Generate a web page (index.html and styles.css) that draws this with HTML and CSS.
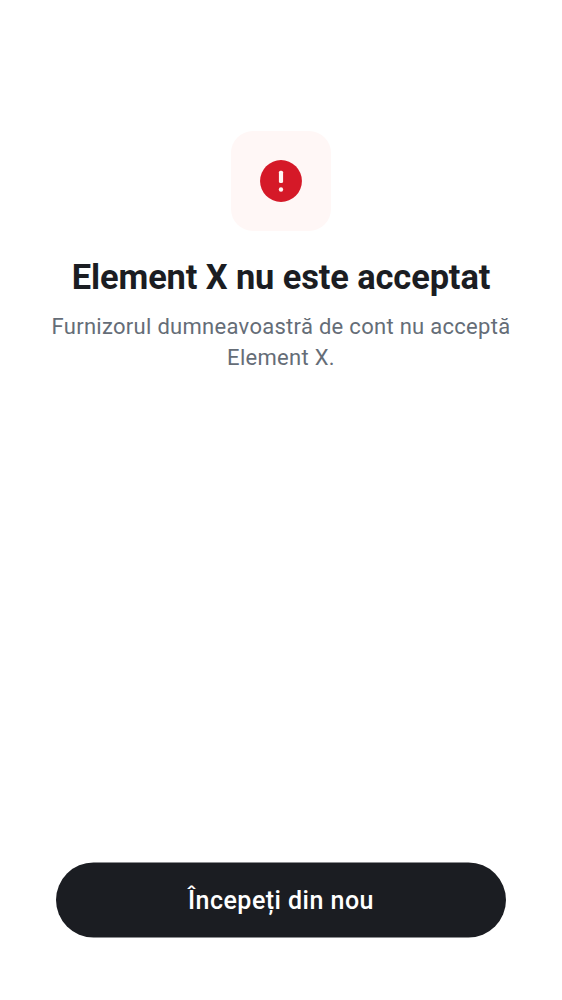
FILE: index.html
```html
<!DOCTYPE html>
<html lang="ro">
<head>
<meta charset="utf-8">
<title>Element X</title>
<link rel="stylesheet" href="styles.css">
</head>
<body>
<main class="screen">
  <div class="icon-tile">
    <svg class="icon" viewBox="0 0 24 24" aria-hidden="true">
      <circle cx="12" cy="12" r="10.05" fill="currentColor"/>
      <rect x="11" y="7.1" width="2" height="5.9" rx=".75" fill="#fff7f6"/>
      <circle cx="12" cy="16.1" r="1.05" fill="#fff7f6"/>
    </svg>
  </div>
  <h1 class="title">Element X nu este acceptat</h1>
  <p class="subtitle">Furnizorul dumneavoastră de cont nu acceptă Element X.</p>
  <button class="button" type="button">Începeți din nou</button>
</main>
</body>
</html>
```

FILE: styles.css
```css
* { box-sizing: border-box; }
body { margin: 0; background: #fff; font-family: Roboto, sans-serif; }
.screen {
  height: 1000px;
  padding: 131px 50px 62px;
  display: flex;
  flex-direction: column;
  align-items: center;
  text-align: center;
}
.icon-tile {
  width: 100px;
  height: 100px;
  border-radius: 22px;
  background: #fff7f6;
  color: #d51928;
  display: flex;
  align-items: center;
  justify-content: center;
}
.icon { width: 50px; height: 50px; }
.title {
  margin: 25px 0 0;
  color: #1b1d22;
  font-size: 34.4px;
  line-height: 43px;
  font-weight: 700;
  letter-spacing: -0.1px;
  white-space: nowrap;
}
.subtitle {
  margin: 12px 0 0;
  color: #656d77;
  font-size: 22px;
  line-height: 31px;
  letter-spacing: 0.29px;
}
.button {
  width: 450px;
  height: 75px;
  margin-top: auto;
  border: 0;
  border-radius: 38px;
  background: #1b1d22;
  color: #fff;
  font-family: inherit;
  font-size: 25px;
  font-weight: 500;
  letter-spacing: 0.47px;
  transform: translateY(-0.5px);
}
```
